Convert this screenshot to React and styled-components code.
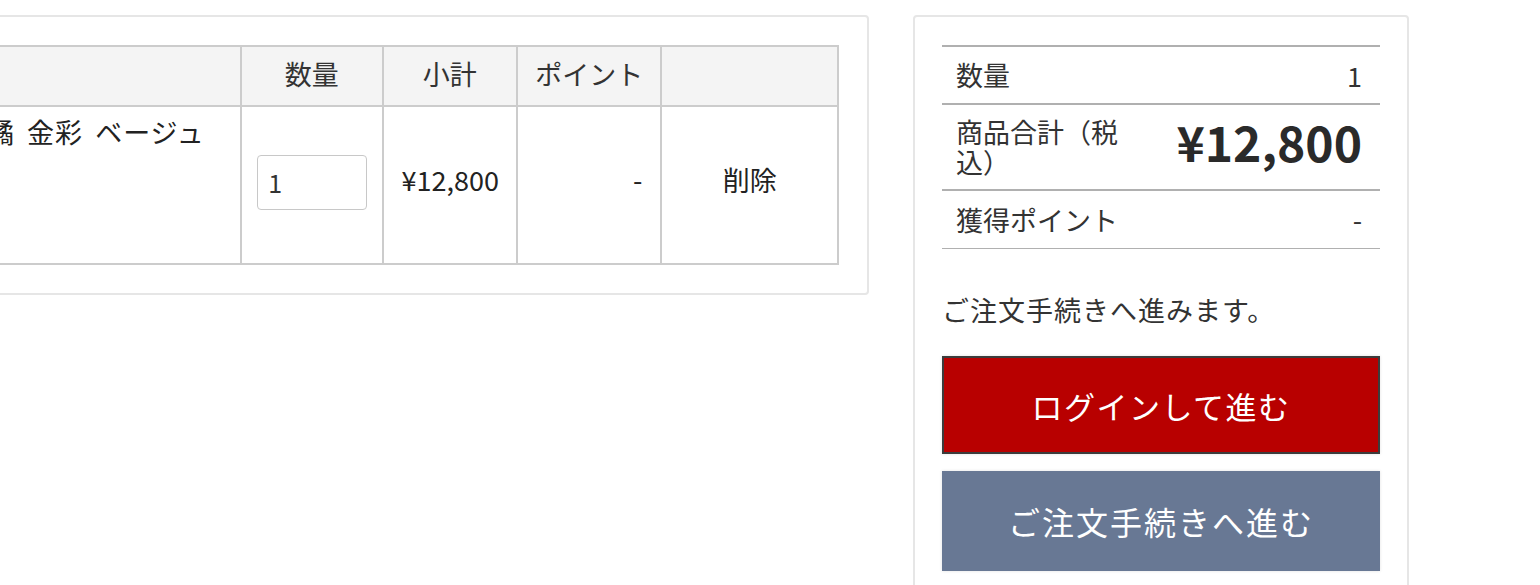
import React from "react";
import styled, { createGlobalStyle } from "styled-components";

const Global = createGlobalStyle`
  html, body { margin: 0; padding: 0; background: #fff; overflow: hidden; }
  body { font-family: "Noto Sans CJK JP", "Noto Sans", sans-serif; color: #333; }
  * { box-sizing: border-box; }
`;

const Page = styled.div`
  display: flex;
  align-items: flex-start;
  gap: 44px;
  padding-top: 15px;
  margin-left: -160px;
  width: 1700px;
`;

const Panel = styled.section`
  width: ${(p) => p.$w}px;
  flex: none;
  border: 2px solid #e6e6e6;
  border-radius: 4px;
  padding: 28px ${(p) => p.$pr}px ${(p) => p.$pb}px 27px;
  background: #fff;
`;

const Table = styled.table`
  width: 100%;
  table-layout: fixed;
  border-collapse: collapse;
  font-size: 27px;
`;

const Th = styled.th`
  height: 60px;
  background: #f4f4f4;
  border: 2px solid #ccc;
  font-weight: normal;
  color: #333;
  text-align: center;
  padding: 0 0 5px;
`;

const Td = styled.td`
  height: 158px;
  border: 2px solid #ccc;
  padding: ${(p) => (p.$top ? "5px 16px 0 48px" : "0 18px 11px")};
  vertical-align: ${(p) => (p.$top ? "top" : "middle")};
  text-align: ${(p) => p.$align || "center"};
  word-spacing: ${(p) => (p.$top ? "5px" : "normal")};
  letter-spacing: ${(p) => (p.$top ? "1px" : "normal")};
  color: #222;
  white-space: nowrap;
`;

const QtyInput = styled.input`
  display: block;
  margin: 5px auto 0 -3px;
  width: 110px;
  height: 55px;
  border: 1px solid #c8c8c8;
  border-radius: 4px;
  padding: 0 10px;
  font: inherit;
  font-size: 25px;
  color: #333;
  background: #fff;
  outline: none;
`;

const Summary = styled.div`
  border-top: 2px solid #b0b0b0;
`;

const SumRow = styled.div`
  display: flex;
  align-items: center;
  justify-content: space-between;
  min-height: ${(p) => p.$h}px;
  padding: 0 18px 0 14px;
  border-bottom: ${(p) => (p.$last ? 1 : 2)}px solid #b0b0b0;
  font-size: 27px;
  color: #333;
`;

const Label = styled.span`
  width: ${(p) => (p.$narrow ? "180px" : "auto")};
  line-height: 1.1;
`;

const Big = styled.span`
  font-size: 48px;
  font-weight: bold;
  color: #2a2a2a;
  margin-top: -12px;
`;

const Note = styled.p`
  margin: 41px 0 26px 0;
  font-size: 27px;
  line-height: 40px;
  letter-spacing: 1px;
  color: #333;
`;

const Button = styled.button`
  display: block;
  width: 100%;
  height: ${(p) => p.$h}px;
  margin-bottom: 17px;
  border: ${(p) => (p.$dark ? "2px solid #3c3c3c" : "none")};
  background: ${(p) => p.$bg};
  color: #fff;
  font-family: inherit;
  font-size: ${(p) => p.$fs}px;
  letter-spacing: ${(p) => p.$ls}px;
  box-shadow: 0 0 3px rgba(0, 0, 0, 0.12);
  cursor: pointer;
`;

export default function App() {
  return (
    <>
      <Global />
      <Page>
        <Panel $w={1029} $pr={28} $pb={28}>
          <Table>
            <colgroup>
              <col style={{ width: 370 }} />
              <col style={{ width: 141 }} />
              <col style={{ width: 134 }} />
              <col style={{ width: 144 }} />
              <col style={{ width: 176 }} />
            </colgroup>
            <thead>
              <tr>
                <Th></Th>
                <Th>数量</Th>
                <Th>小計</Th>
                <Th>ポイント</Th>
                <Th></Th>
              </tr>
            </thead>
            <tbody>
              <tr>
                <Td $top $align="left">扇子 橘 金彩 ベージュ</Td>
                <Td>
                  <QtyInput defaultValue="1" />
                </Td>
                <Td>¥12,800</Td>
                <Td $align="right">-</Td>
                <Td>削除</Td>
              </tr>
            </tbody>
          </Table>
        </Panel>
        <Panel $w={496} $pr={27} $pb={40}>
          <Summary>
            <SumRow $h={58}>
              <Label>数量</Label>
              <span>1</span>
            </SumRow>
            <SumRow $h={86}>
              <Label $narrow>商品合計（税込）</Label>
              <Big>¥12,800</Big>
            </SumRow>
            <SumRow $h={58} $last>
              <Label>獲得ポイント</Label>
              <span>-</span>
            </SumRow>
          </Summary>
          <Note>ご注文手続きへ進みます。</Note>
          <Button $dark $bg="#b80000" $h={98} $fs={31} $ls={1.5}>ログインして進む</Button>
          <Button $bg="#687894" $h={100} $fs={32} $ls={2}>ご注文手続きへ進む</Button>
        </Panel>
      </Page>
    </>
  );
}
